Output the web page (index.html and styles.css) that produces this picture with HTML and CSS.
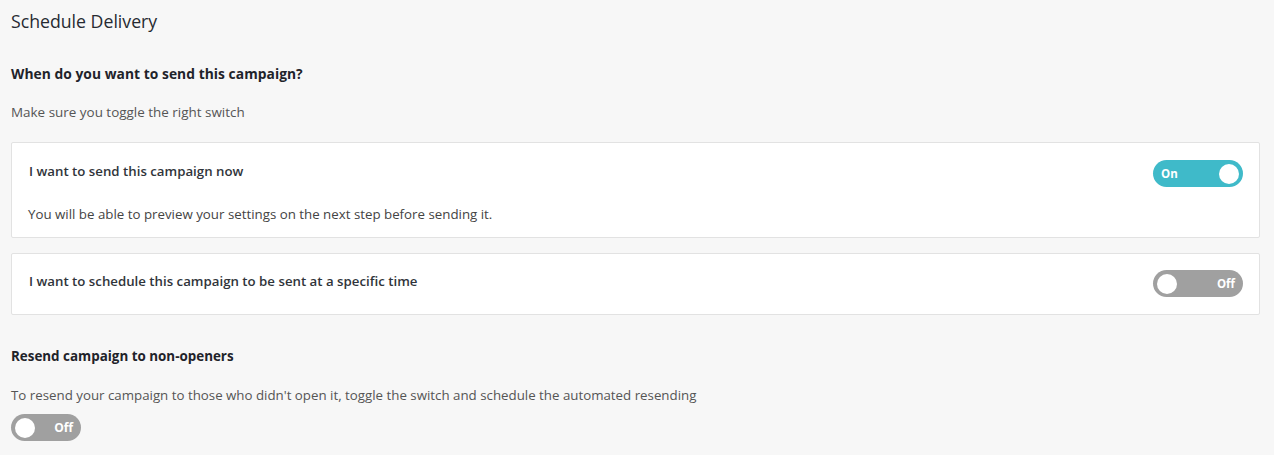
FILE: index.html
```html
<!DOCTYPE html>
<html>
<head>
<meta charset="utf-8">
<link rel="stylesheet" href="styles.css">
</head>
<body>
<div class="page">
  <h1 class="title">Schedule Delivery</h1>
  <h2 class="section-title first">When do you want to send this campaign?</h2>
  <p class="hint">Make sure you toggle the right switch</p>
  <div class="card card-now">
    <div class="card-row">
      <span class="card-title">I want to send this campaign now</span>
      <span class="toggle on"><span class="toggle-label">On</span><span class="knob"></span></span>
    </div>
    <p class="card-desc">You will be able to preview your settings on the next step before sending it.</p>
  </div>
  <div class="card card-schedule">
    <div class="card-row">
      <span class="card-title">I want to schedule this campaign to be sent at a specific time</span>
      <span class="toggle off"><span class="knob"></span><span class="toggle-label">Off</span></span>
    </div>
  </div>
  <h2 class="section-title second">Resend campaign to non-openers</h2>
  <p class="hint hint-resend">To resend your campaign to those who didn't open it, toggle the switch and schedule the automated resending</p>
  <span class="toggle off small"><span class="knob"></span><span class="toggle-label">Off</span></span>
</div>
</body>
</html>
```
FILE: styles.css
```css
html, body {
  margin: 0;
  padding: 0;
  background: #f7f7f7;
}
body {
  font-family: "Open Sans", "Noto Sans", sans-serif;
  color: #333;
}
.page {
  padding: 0 14px 0 11px;
  display: flex;
  flex-direction: column;
  align-items: stretch;
}
.title {
  margin: 10px 0 0;
  font-size: 17.7px;
  font-weight: 400;
  line-height: 22px;
  color: #262a31;
}
.section-title {
  margin: 0;
  font-weight: 700;
  line-height: 18px;
  color: #1f232a;
}
.section-title.first {
  margin-top: 33px;
  font-size: 13.8px;
  letter-spacing: 0.05px;
}
.section-title.second {
  margin-top: 32px;
  font-size: 13.4px;
}
.hint {
  margin: 20px 0 0;
  font-size: 13.45px;
  line-height: 18px;
  color: #555;
}
.card {
  background: #fff;
  border: 1px solid #e2e2e2;
  border-radius: 2px;
  padding: 0 16px;
}
.card-now {
  margin-top: 21px;
  padding-top: 17px;
  padding-bottom: 14px;
}
.card-schedule {
  margin-top: 15px;
  padding-top: 16px;
  padding-bottom: 17px;
}
.card-row {
  display: flex;
  justify-content: space-between;
  align-items: flex-start;
  padding-left: 1px;
}
.card-title {
  font-size: 13.25px;
  line-height: 22px;
  font-weight: 600;
  color: #30343a;
}
.card-desc {
  margin: 18px 0 0;
  font-size: 13.3px;
  line-height: 18px;
  color: #444;
}
.toggle {
  display: inline-flex;
  align-items: center;
  justify-content: space-between;
  box-sizing: border-box;
  width: 90px;
  height: 27px;
  border-radius: 14px;
  padding: 0 4px 0 8px;
  color: #fff;
  font-size: 11.5px;
  font-weight: 700;
}
.toggle.on {
  background: #3fbac9;
}
.toggle.off {
  background: #a0a0a0;
  padding: 0 8px 0 4px;
}
.knob {
  width: 20px;
  height: 20px;
  border-radius: 50%;
  background: #fff;
}
.toggle-label {
  line-height: 1;
}
.hint-resend {
  margin-top: 21px;
  font-size: 13.3px;
}
.toggle.small {
  width: 70px;
  margin-top: 10px;
  font-size: 12px;
}
```
